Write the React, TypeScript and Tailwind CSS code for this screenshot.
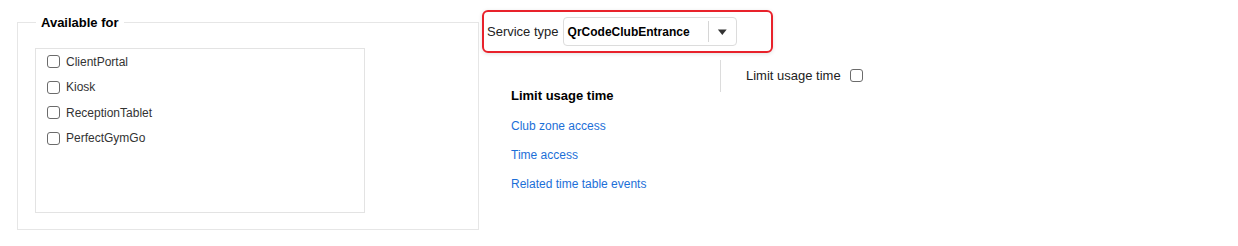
import React from 'react'

const font = "font-['Liberation_Sans',Arial,sans-serif]"

function Check({ className = '' }: { className?: string }) {
  return (
    <input
      type="checkbox"
      className={`appearance-none w-[13px] h-[13px] border border-[#6b6b6b] rounded-[3px] bg-white shrink-0 ${className}`}
    />
  )
}

const apps = ['ClientPortal', 'Kiosk', 'ReceptionTablet', 'PerfectGymGo']
const links = ['Club zone access', 'Time access', 'Related time table events']

export default function App() {
  return (
    <div className={`w-[1238px] h-[246px] bg-white flex items-start ${font} text-[#333]`}>
      {/* Available for */}
      <div className="pl-[17px] pt-[15px]">
        <fieldset className="w-[462px] border border-[#e6e6e6] pl-[17px] pr-[17px] pb-[16px]">
          <legend className="ml-[1px] px-[5px] text-[13px] leading-[15px] font-bold text-black">Available for</legend>
          <div className="mt-[18px] w-[330px] h-[165px] border border-[#e3e3e3] pl-[11px] pt-0">
            {apps.map(a => (
              <label key={a} className="flex items-center h-[25.5px] text-[12px] text-[#333]">
                <Check className="mr-[6px]" />
                {a}
              </label>
            ))}
          </div>
        </fieldset>
      </div>

      {/* Service + links */}
      <div className="ml-[3px] pt-[10px]">
        <div className="w-[291px] h-[43px] border-2 border-[#e8222b] rounded-[6px] shadow-[0_1px_4px_rgba(0,0,0,0.12)] flex items-center pl-[3px]">
          <span className="text-[13px] text-[#222]">Service type</span>
          <div className="ml-[4px] w-[174px] h-[29px] border border-[#dcdcdc] rounded-[4px] flex items-center">
            <span className="pl-[4px] w-[147px] text-[12px] font-bold text-black">QrCodeClubEntrance</span>
            <div className="w-px h-[21px] bg-[#d6d6d6]" />
            <svg width="26" height="10" viewBox="0 0 26 10" className="ml-[1px]">
              <polygon points="8,2.5 17,2.5 12.5,8" fill="#333" />
            </svg>
          </div>
        </div>

        <div className="flex mt-[7px]">
          <div className="w-[238px] pl-[29px] pt-[28px]">
            <div className="text-[13px] leading-[16px] font-bold text-black">Limit usage time</div>
            <div className="flex flex-col mt-[15px] gap-[15px]">
              {links.map(l => (
                <a key={l} className="text-[12px] leading-[14px] text-[#1c6fd8] cursor-pointer">{l}</a>
              ))}
            </div>
          </div>
          <div className="h-[32px] border-l border-[#dcdcdc] pl-[25px] pt-[6px]">
            <label className="flex items-center text-[13px] text-[#222]">
              Limit usage time
              <Check className="ml-[9px]" />
            </label>
          </div>
        </div>
      </div>
    </div>
  )
}
